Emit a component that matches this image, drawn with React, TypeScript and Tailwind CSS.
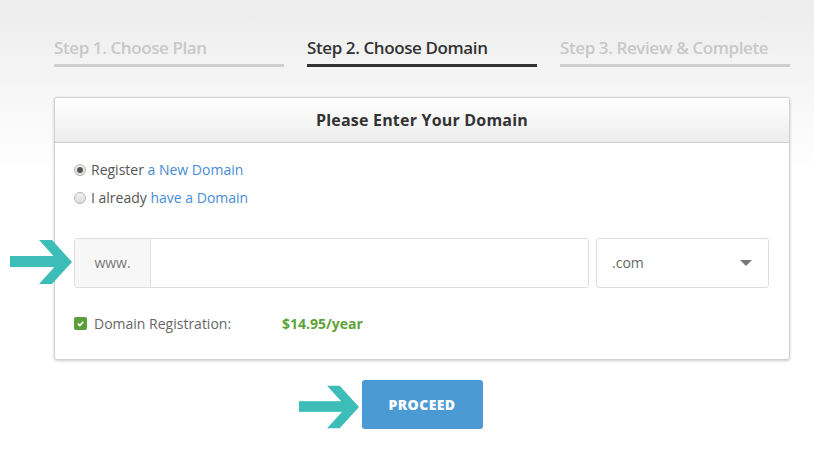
import type { ReactNode } from "react";

function Arrow({ className }: { className?: string }) {
  return (
    <svg viewBox="0 0 62 44" className={className} aria-hidden>
      <rect x="0" y="16" width="50" height="11" fill="#3dbdb7" />
      <polygon points="29,0 42,0 62,22 42,44 29,44 49,22" fill="#3dbdb7" />
    </svg>
  );
}

function Radio({ checked, children }: { checked?: boolean; children: ReactNode }) {
  return (
    <label className="flex h-[28px] items-center gap-[5px] text-[14px] text-[#555]">
      <span className="grid size-[12px] place-items-center rounded-full border border-[#b5b5b5] bg-gradient-to-b from-[#f2f2f2] to-[#dcdcdc]">
        {checked ? <span className="size-[6px] rounded-full bg-[#555]" /> : null}
      </span>
      <span>{children}</span>
    </label>
  );
}

const steps = [
  { label: "Step 1. Choose Plan", active: false },
  { label: "Step 2. Choose Domain", active: true },
  { label: "Step 3. Review & Complete", active: false },
];

export default function App() {
  return (
    <div className="min-h-[458px] w-full bg-white bg-[linear-gradient(to_bottom,#ececec_0px,#f6f6f6_90px,#ffffff_170px)] font-['Open_Sans',sans-serif]">
      <div className="ml-[54px] flex w-[736px] flex-col pt-[35px]">
        <div className="grid grid-cols-3 gap-[23px]">
          {steps.map((s) => (
            <div
              key={s.label}
              className={
                s.active
                  ? "border-b-[3px] border-[#333] pb-[3px] text-[17px] font-semibold tracking-[-0.4px] text-[#333]"
                  : "border-b-[3px] border-[#cfcfcf] pb-[3px] text-[17px] font-semibold tracking-[-0.4px] text-[#c8c8c8]"
              }
            >
              {s.label}
            </div>
          ))}
        </div>

        <div className="mt-[30px] rounded-[3px] border border-[#d2d2d2] bg-white shadow-[0_1px_3px_rgba(0,0,0,0.2)]">
          <div className="flex h-[45px] items-center justify-center rounded-t-[3px] border-b border-[#cfcfcf] bg-gradient-to-b from-white to-[#ededed] text-[16px] font-bold tracking-[0.2px] text-[#333]">
            Please Enter Your Domain
          </div>
          <div className="flex flex-col px-[19px] pt-[13px] pb-[25px]">
            <Radio checked>
              Register <span className="text-[#4a8bd6]">a New Domain</span>
            </Radio>
            <Radio>
              I already <span className="text-[#4a8bd6]">have a Domain</span>
            </Radio>

            <div className="relative mt-[26px] flex gap-[7px]">
              <Arrow className="absolute left-[-64px] top-[2px] h-[44px] w-[62px]" />
              <div className="flex h-[50px] flex-1 overflow-hidden rounded-[3px] border border-[#dedede]">
                <div className="flex w-[76px] items-center justify-center border-r border-[#dedede] bg-[#f7f7f7] text-[14px] text-[#777]">
                  www.
                </div>
                <div className="flex-1 bg-white" />
              </div>
              <div className="mr-[1px] flex h-[50px] w-[173px] items-center justify-between rounded-[3px] border border-[#dedede] pl-[15px] pr-[16px] text-[14px] text-[#666]">
                <span>.com</span>
                <span className="h-0 w-0 border-x-[6px] border-t-[6px] border-x-transparent border-t-[#777]" />
              </div>
            </div>

            <div className="mt-[25px] flex items-center text-[14px]">
              <span className="grid size-[13px] place-items-center rounded-[2px] bg-[#5b9e3c]">
                <svg viewBox="0 0 10 10" className="size-[9px]" aria-hidden>
                  <path d="M2 5.2 L4.2 7.2 L8 3" fill="none" stroke="white" strokeWidth="1.8" />
                </svg>
              </span>
              <span className="ml-[7px] w-[188px] text-[#666]">Domain Registration:</span>
              <span className="font-bold text-[#5ea33a]">$14.95/year</span>
            </div>
          </div>
        </div>

        <div className="mt-[20px] flex justify-center">
          <div className="relative">
            <Arrow className="absolute left-[-63px] top-[5px] h-[44px] w-[60px]" />
            <button className="h-[49px] w-[121px] rounded-[3px] bg-[#4b9ad3] text-[14px] font-extrabold tracking-[0.4px] text-white">
              PROCEED
            </button>
          </div>
        </div>
      </div>
    </div>
  );
}
